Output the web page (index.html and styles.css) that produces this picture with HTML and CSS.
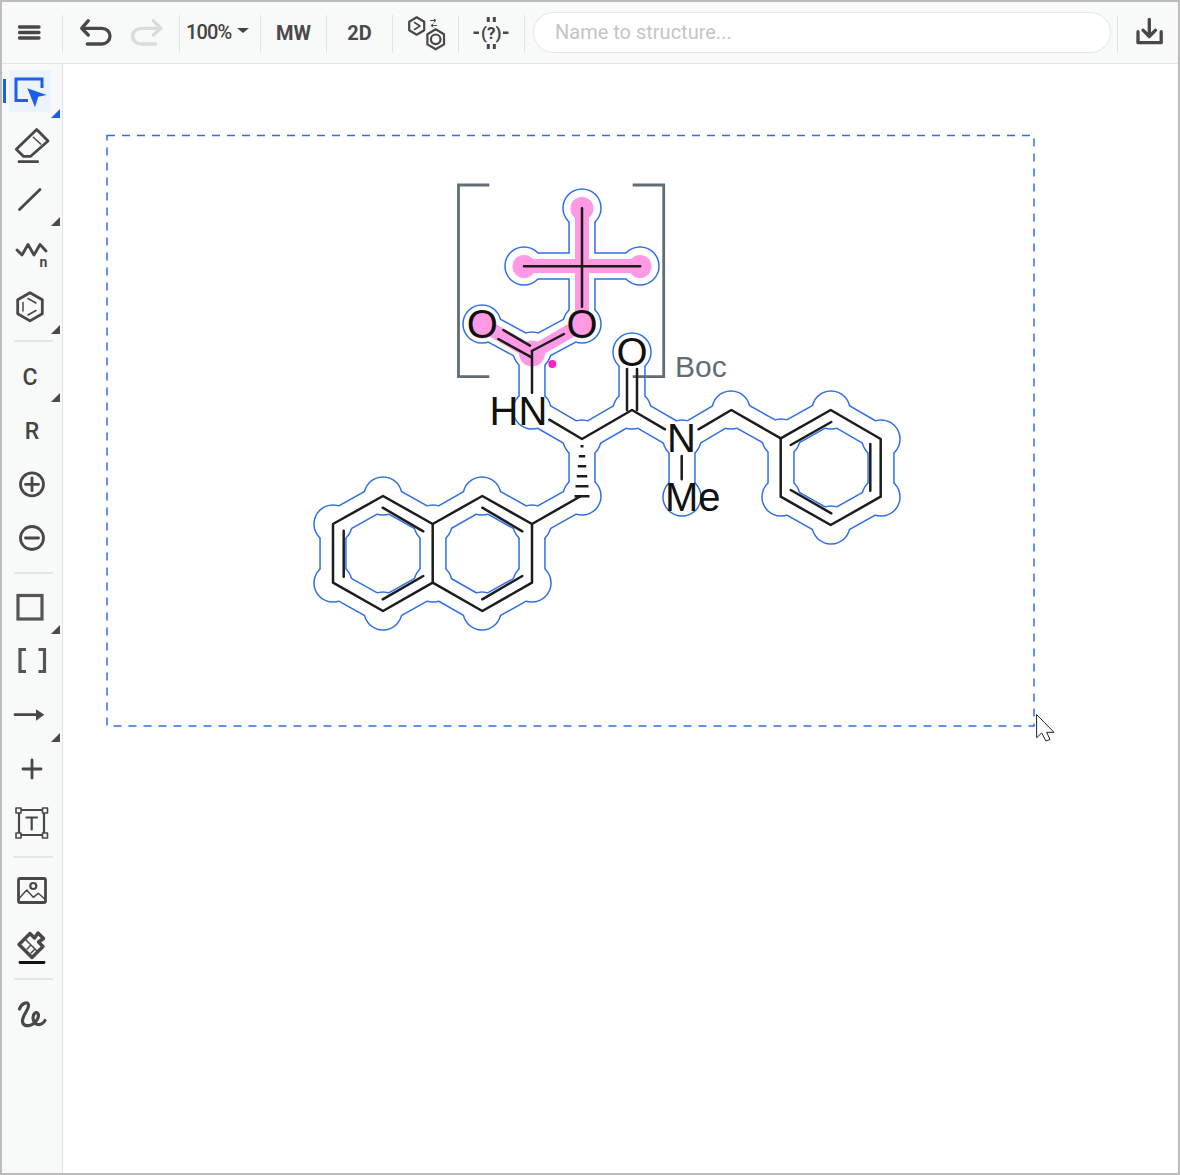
FILE: index.html
```html
<!DOCTYPE html>
<html lang="en">
<head>
<meta charset="utf-8">
<title>Structure editor</title>
<link rel="stylesheet" href="styles.css">
</head>
<body>
<div class="app">
  <header class="toolbar">
    <div class="tool tool-menu">
      <svg class="ico ico-thick" viewBox="11 14 36 36"><path d="M19.500 27H39M19.500 32.500H39M19.500 38H39"/></svg>
    </div>
    <span class="vsep"></span>
    <div class="tool tool-history">
      <svg class="ico ico-thick" viewBox="78 14 36 36"><path d="M88.300 20.700L81.700 28.300L88.300 35M82 28.300H101.700C106.500 28.300 110 31.500 110 36C110 40.500 106.500 44 101.700 44H87.300"/></svg>
      <svg class="ico ico-thick ico-off" viewBox="129 14 36 36"><path d="M153.300 20.700L161 28.300L153.300 35M160.500 28.300H141.700C136.500 28.300 132.700 31.500 132.700 36C132.700 40.500 136.500 44 141.700 44H155.700"/></svg>
    </div>
    <span class="vsep"></span>
    <div class="tool tool-zoom"><span class="zoom-label">100%</span><span class="caret"></span></div>
    <span class="vsep"></span>
    <div class="tool tool-text"><span class="label">MW</span></div>
    <span class="vsep"></span>
    <div class="tool tool-text"><span class="label">2D</span></div>
    <span class="vsep"></span>
    <div class="tool tool-icon">
      <svg class="ico ico-fine" viewBox="407 14 36 36">
        <path d="M416.700 17.300L424.200 21.700V30.300L416.700 34.700L409.200 30.300V21.700Z"/>
        <path class="ico-thin" d="M414.500 22.500L420 26L414.500 29.500"/>
        <path d="M435.700 29.300L444 34.200V44.400L435.700 49.300L427.400 44.400V34.200Z"/>
        <circle class="ico-thin-circle" cx="435.700" cy="39.300" r="4.800"/>
        <path class="ico-hair" d="M430.500 20.500H435.500M434 19L436 20.500L434 22M436.500 25.500H431.500M433 24L431 25.500L433 27"/>
      </svg>
    </div>
    <span class="vsep"></span>
    <div class="tool tool-icon">
      <svg class="ico ico-dash" viewBox="474 14 36 36">
        <path class="dash-h" d="M474.500 32.700H480M504 32.700H509.500"/>
        <path d="M489.300 17V22M495.300 17V22M489.300 44V49M495.300 44V49"/>
        <text class="query" x="492.300" y="38.500">(?)</text>
      </svg>
    </div>
    <span class="vsep"></span>
    <div class="name-wrap"><input class="name-input" type="text" placeholder="Name to structure..."></div>
    <span class="vsep"></span>
    <div class="tool tool-download">
      <svg class="ico ico-thick" viewBox="1131 14 36 36"><path d="M1149.300 19.500V36M1143 30.200L1149.300 36.500L1155.500 30.200M1138 31.700V42.700H1161.200V31.700"/></svg>
    </div>
  </header>
  <div class="body">
    <aside class="sidebar">
      <div class="btn btn-corner btn-active">
        <span class="bar"></span>
        <span class="active-bg">
          <svg class="ico ico-blue" viewBox="12 73 36 36"><path d="M42 88V79H16V100.500H28"/><polygon class="fill-blue" points="27.300,88.300 46.700,95 38.300,96.700 35,107.300"/></svg>
        </span>
        <span class="corner corner-blue"></span>
      </div>
      <div class="btn">
        <svg class="ico" viewBox="14 127 36 36"><path d="M36.700 129.500L48 141L30.700 156.300H23.300L16.300 149.300ZM19 161.700H37.700"/><path class="ico-thin" d="M33.300 137.300L40.700 144"/></svg>
      </div>
      <div class="btn btn-corner">
        <svg class="ico" viewBox="12 181 36 36"><path d="M19.500 209.500L40 189.500"/></svg>
        <span class="corner"></span>
      </div>
      <div class="btn btn-corner">
        <svg class="ico" viewBox="12 235 36 36"><path d="M17 250L22 255L28 244.500L34 255L40 244.500L46 251"/><text class="n-label" x="39.500" y="266.500">n</text></svg>
      </div>
      <div class="btn btn-corner">
        <svg class="ico" viewBox="12 289 36 36"><path d="M30 292.700L42.300 299.800V313.800L30 320.900L17.700 313.800V299.800Z"/><path class="ico-thin" d="M23 302.500V311M28 298.500L36 303M28 315L36 310.500"/></svg>
        <span class="corner"></span>
      </div>
      <div class="hsep"></div>
      <div class="btn btn-corner">
        <span class="atom">C</span>
        <span class="corner corner-up"></span>
      </div>
      <div class="btn"><span class="atom">R</span></div>
      <div class="btn">
        <svg class="ico" viewBox="14 467 36 36"><circle cx="32" cy="484.300" r="11.500"/><path d="M25.500 484.300H38.500M32 477.800V490.800"/></svg>
      </div>
      <div class="btn">
        <svg class="ico" viewBox="14 521 36 36"><circle cx="32" cy="538" r="11.500"/><path d="M25.500 538H38.500"/></svg>
      </div>
      <div class="hsep hsep-tight"></div>
      <div class="btn btn-corner">
        <svg class="ico ico-bold" viewBox="12 589 36 36"><rect x="18" y="595.500" width="24" height="23.500"/></svg>
        <span class="corner"></span>
      </div>
      <div class="btn">
        <svg class="ico ico-bold" viewBox="14 643 36 36"><path d="M26 649.500H20V671.500H26M38.500 649.500H44.500V671.500H38.500"/></svg>
      </div>
      <div class="btn btn-corner">
        <svg class="ico" viewBox="12 697 36 36"><path d="M15 714.700H37"/><polygon class="fill-dark" points="36,709.300 44.300,714.700 36,720.700"/></svg>
        <span class="corner"></span>
      </div>
      <div class="btn">
        <svg class="ico" viewBox="14 751 36 36"><path d="M23 769H41M32 760V778"/></svg>
      </div>
      <div class="btn">
        <svg class="ico ico-frame" viewBox="14 805 36 36">
          <rect x="19" y="810" width="25" height="25"/>
          <rect class="handle" x="16" y="808" width="5" height="5"/>
          <rect class="handle" x="42.500" y="808" width="5" height="5"/>
          <rect class="handle" x="16" y="833" width="5" height="5"/>
          <rect class="handle" x="42.500" y="833" width="5" height="5"/>
          <path d="M26.500 817.500H37M31.700 817.500V829.500"/>
        </svg>
      </div>
      <div class="hsep hsep-tight"></div>
      <div class="btn">
        <svg class="ico" viewBox="14 873 36 36">
          <rect x="18.500" y="878.500" width="27" height="24" rx="1.500"/>
          <circle class="ico-thin-circle" cx="33.300" cy="886" r="3"/>
          <path class="ico-thin" d="M19.300 898.300L26.700 890L33.300 897.300L38.300 893.300L45 899.300"/>
        </svg>
      </div>
      <div class="btn">
        <svg class="ico" viewBox="14 927 36 36">
          <path class="ico-heavy" d="M19 944.500L30 933.500L34.500 938L38 933L43.500 938.500L38.500 942L43 946.500L32 957.500Z"/>
          <path class="ico-thin" d="M25 939L37.500 951.500M27 949L31 945M31 953L35 949"/>
          <path class="ink" d="M20 962.500H44"/>
        </svg>
      </div>
      <div class="hsep"></div>
      <div class="btn">
        <svg class="ico ico-curve" viewBox="14 997 36 36"><path d="M19.500 1009C21.500 1003 28 1001 28.500 1005C29 1010 21.500 1016 22.500 1022C23.500 1027.500 33 1027 37.500 1019C40 1014 37 1011.500 35 1013C31.500 1016 33 1024 38 1024.500C41 1024.800 43.500 1023 45 1020.500"/></svg>
      </div>
    </aside>
    <main class="canvas">
      <svg class="sheet" viewBox="63 64 1115 1109">
        <defs>
          <path id="bonds" d="M582 208V324M524 266H640M482 324L532 351L582 324M532 351V410L582 439L632 410V352M632 410L682 439V497M682 439L731 410L781 438M582 439V496L532 524M333 524L383 496L433 524V583L383 611L333 583ZM433 524L482 496L532 524V583L482 611L433 583M781 438L831 410L881 439V497L831 525L781 497Z"/>
          <path id="atoms" d="M582 208h.01M524 266h.01M640 266h.01M582 324h.01M482 324h.01M532 351h.01M532 410h.01M582 439h.01M632 410h.01M632 352h.01M682 439h.01M682 497h.01M731 410h.01M781 438h.01M831 410h.01M881 439h.01M881 497h.01M831 525h.01M781 497h.01M582 496h.01M532 524h.01M532 583h.01M482 496h.01M482 611h.01M433 524h.01M433 583h.01M383 496h.01M383 611h.01M333 524h.01M333 583h.01"/>
        </defs>
        <rect class="selection" x="107" y="135.500" width="927" height="590.500"/>
        <use href="#bonds" class="halo-bond-outer"/>
        <use href="#atoms" class="halo-atom-outer"/>
        <use href="#bonds" class="halo-bond-inner"/>
        <use href="#atoms" class="halo-atom-inner"/>
        <path class="pink-bond" d="M582 208V324M524 266H640M482 324L532 353L582 324"/>
        <g class="pink-fill">
          <circle cx="582" cy="208.500" r="11.500"/>
          <circle cx="524" cy="266.500" r="11.500"/>
          <circle cx="640" cy="266.500" r="11.500"/>
          <ellipse cx="482.300" cy="324.500" rx="13" ry="14"/>
          <ellipse cx="582" cy="324.500" rx="13" ry="14"/>
          <circle cx="532" cy="353.500" r="13"/>
        </g>
        <circle class="pink-dot" cx="552.300" cy="364" r="4"/>
        <path class="bracket" d="M489.300 185H458.500V376.700H489.300M632.700 185H663.700V376.700H632.700"/>
        <path class="bond" d="M582 208.300V306.700M524 266.300H640.300M503.300 330L530 345.700M498.300 339L532 357.700M564 334L531.700 351M532 351V392.700M549.300 419.700L582 439L632 410L665 429.300M627 369V410M637 369V410M681.700 456V479.300M698.500 429.300L731.300 410L780.700 438.300M532 524L581 496"/>
        <path class="bond" d="M333 524L383 496L432.700 524V582.700L383 611L333 582.700ZM432.700 524L482.300 496L532 524V582.700L482.300 611L432.700 582.700M780.700 438.300L830.700 410L880.700 439V496.700L830.700 525L780.700 496.700ZM382.700 507.700L423.300 531.300M382.700 599.300L423.300 576M343.700 530.700V576.700M482.300 507.700L522.300 531.300M482.300 599.300L522.300 576M790.700 445L831.300 422M790.700 490L831.300 513.300M870.300 444V490.700"/>
        <path class="hash" d="M580.500 446.300H583.500M578.800 456.300H585.200M577.800 466.300H586.200M576.800 476.300H587.200M575.500 486.300H588.500M574.500 496.300H589.500"/>
        <text class="atom-text" x="489.500" y="424.500">HN</text>
        <text class="atom-text" x="667" y="452">N</text>
        <text class="atom-text" x="665" y="511">Me</text>
        <text class="atom-text atom-mid" x="632" y="366">O</text>
        <text class="atom-text atom-mid" x="482.300" y="338">O</text>
        <text class="atom-text atom-mid" x="582" y="338">O</text>
        <text class="boc" x="675" y="377">Boc</text>
        <polygon class="cursor" points="1036.500,714.500 1054,732.300 1046.700,732.300 1050,739.500 1046,741 1041.700,733 1036.700,737.700"/>
      </svg>
    </main>
  </div>
</div>
</body>
</html>
```

FILE: styles.css
```css
* { box-sizing: border-box; }
html, body { margin: 0; padding: 0; background: #fff; }
body { font-family: Roboto, "Liberation Sans", sans-serif; color: #444; }

.app {
  width: 1180px;
  height: 1175px;
  border: 2px solid #bcbcbc;
  display: flex;
  flex-direction: column;
  background: #fff;
  overflow: hidden;
}

/* top bar */
.toolbar {
  height: 62px;
  flex: none;
  display: flex;
  background: #f8f9f9;
  border-bottom: 1px solid #e2e4e4;
}
.tool { height: 61px; flex: none; display: flex; }
.tool .ico { margin-top: 12px; }
.tool-menu { width: 60px; padding-left: 9px; }
.tool-history { width: 116px; padding-left: 15px; gap: 15px; }
.tool-zoom { width: 80px; padding-left: 6px; align-items: center; gap: 6px; }
.tool-text { width: 65px; align-items: center; justify-content: center; }
.tool-icon { width: 65px; padding-left: 14px; }
.tool-download { width: 60px; padding-left: 13px; }
.vsep { flex: none; width: 1px; height: 38px; margin-top: 13px; background: #e2e4e4; }
.zoom-label { font-size: 20px; font-weight: 500; color: #444; letter-spacing: -0.9px; margin-bottom: 2px; }
.label { font-size: 20px; font-weight: 700; color: #4a4a4a; }
.caret {
  width: 0;
  height: 0;
  margin-bottom: 5px;
  border-left: 6px solid transparent;
  border-right: 6px solid transparent;
  border-top: 5px solid #444;
}
.name-wrap { flex: 1; padding: 10px 6px 0 8px; }
.name-input {
  display: block;
  width: 100%;
  height: 41px;
  padding: 0 20px 2px 21px;
  border: 1.5px solid #e4e6e6;
  border-radius: 21px;
  background: #fff;
  font: 400 20px Roboto, sans-serif;
  outline: none;
}
.name-input::placeholder { color: #c3c5c8; opacity: 1; }

/* layout */
.body { flex: 1; display: flex; min-height: 0; }
.sidebar {
  width: 61px;
  flex: none;
  background: #f8f9f9;
  border-right: 1px solid #e2e4e4;
}
.canvas { flex: 1; background: #fff; min-width: 0; }
.sheet { display: block; width: 1115px; height: 1109px; }

/* side buttons */
.btn {
  position: relative;
  width: 60px;
  height: 54px;
  display: flex;
  align-items: center;
  justify-content: center;
}
.btn-corner { padding-right: 4px; }
.active-bg {
  width: 42px;
  height: 42px;
  display: flex;
  align-items: center;
  justify-content: center;
  background: #edf3fb;
  border-radius: 2px;
}
.bar { position: absolute; left: 1px; top: 15px; width: 3px; height: 24px; background: #1a60e8; }
.corner {
  position: absolute;
  right: 2px;
  bottom: 0;
  width: 9px;
  height: 9px;
  background: #4a4a4a;
  clip-path: polygon(100% 0, 100% 100%, 0 100%);
}
.corner-blue { background: #1a60e8; }
.corner-up { bottom: 2px; }
.hsep { height: 2px; margin: 6px 9px 8px 12px; background: #e4e6e6; }
.hsep-tight { margin-bottom: 6px; }
.atom { font-size: 23px; font-weight: 500; color: #444; line-height: 1; }

/* icons */
.ico {
  display: block;
  width: 36px;
  height: 36px;
  flex: none;
  overflow: visible;
  fill: none;
  stroke: #484848;
  stroke-width: 2.800;
  stroke-linecap: round;
  stroke-linejoin: round;
}
.ico-thick { stroke-width: 3.300; }
.ico-off { stroke: #dadcdc; }
.ico-bold { stroke-width: 3.200; stroke: #555; stroke-linecap: butt; stroke-linejoin: miter; }
.ico-curve { stroke-width: 3.200; }
.ico-fine { stroke-width: 2.200; }
.ico-dash { stroke-width: 3; stroke-linecap: butt; }
.dash-h { stroke-width: 2.500; }
.ico-thin { stroke-width: 1.500; }
.ico-hair { stroke-width: 1; }
.ico-thin-circle { stroke-width: 2.200; }
.ico-heavy { stroke-width: 3.400; }
.ico-blue { stroke: #1a60e8; stroke-width: 3; stroke-linecap: butt; stroke-linejoin: miter; }
.fill-blue { fill: #1a60e8; stroke: none; }
.fill-dark { fill: #484848; stroke: none; }
.ink { stroke: #111; }
.ico-frame { stroke-width: 2.200; }
.ico-frame .handle { fill: #f8f9f9; stroke-width: 1.600; }
.n-label { font: 700 14px Roboto, sans-serif; fill: #484848; stroke: none; }
.query { font: 700 17px Roboto, sans-serif; fill: #444; stroke: none; text-anchor: middle; }

/* drawing */
.selection { fill: none; stroke: #2f6fe6; stroke-width: 1.500; stroke-dasharray: 8 7; }
.halo-bond-outer { fill: none; stroke: #2f6fe6; stroke-width: 27.400; }
.halo-atom-outer { fill: none; stroke: #2f6fe6; stroke-width: 39.600; stroke-linecap: round; }
.halo-bond-inner { fill: none; stroke: #fff; stroke-width: 24.400; }
.halo-atom-inner { fill: none; stroke: #fff; stroke-width: 36.600; stroke-linecap: round; }
.pink-bond { fill: none; stroke: #ff99e3; stroke-width: 14; }
.pink-fill { fill: #ff99e3; }
.pink-dot { fill: #ff1fc6; }
.bracket { fill: none; stroke: #5f6e76; stroke-width: 2.800; }
.bond { fill: none; stroke: #1c1c1c; stroke-width: 2.500; stroke-linecap: round; stroke-linejoin: round; }
.hash { fill: none; stroke: #1c1c1c; stroke-width: 2.500; }
.atom-text { font: 400 40px "Liberation Sans", Arial, sans-serif; fill: #111; }
.atom-mid { text-anchor: middle; }
.boc { font: 400 30px "Liberation Sans", Arial, sans-serif; fill: #5f6e76; }
.cursor { fill: #fff; stroke: #222; stroke-width: 1; }
```
